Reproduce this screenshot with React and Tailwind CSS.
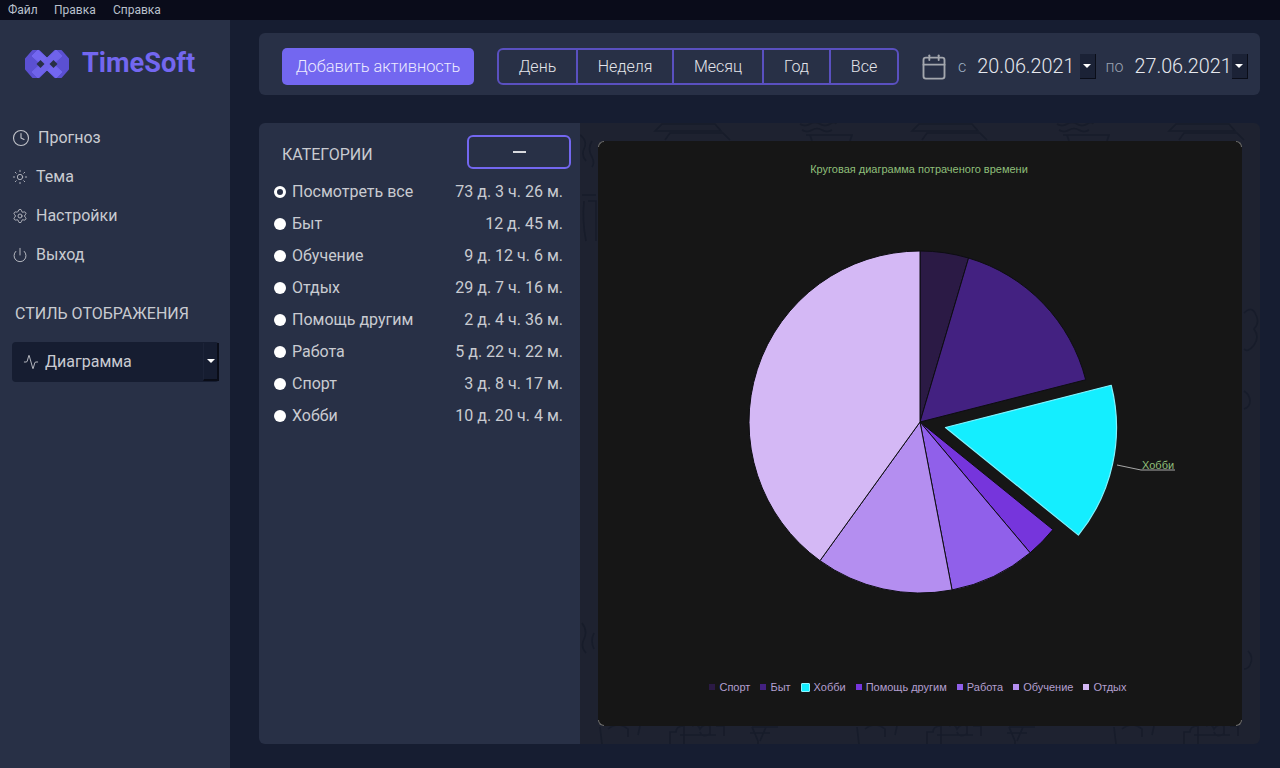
import React from "react";
import { Clock, Sun, Settings, Power, Activity, Calendar } from "lucide-react";

const rows = [
  ["Посмотреть все", "73 д. 3 ч. 26 м."],
  ["Быт", "12 д. 45 м."],
  ["Обучение", "9 д. 12 ч. 6 м."],
  ["Отдых", "29 д. 7 ч. 16 м."],
  ["Помощь другим", "2 д. 4 ч. 36 м."],
  ["Работа", "5 д. 22 ч. 22 м."],
  ["Спорт", "3 д. 8 ч. 17 м."],
  ["Хобби", "10 д. 20 ч. 4 м."],
];

const slices = [
  { name: "Спорт", from: 0, to: 16.5, color: "#2b1a45" },
  { name: "Быт", from: 16.5, to: 75.7, color: "#432181" },
  { name: "Хобби", from: 75.7, to: 129, color: "#14eeff", out: true },
  { name: "Помощь другим", from: 129, to: 139.9, color: "#7635dc" },
  { name: "Работа", from: 139.9, to: 169.2, color: "#9060ea" },
  { name: "Обучение", from: 169.2, to: 215.8, color: "#b48ef0" },
  { name: "Отдых", from: 215.8, to: 360, color: "#d4b8f5" },
];

function arc(cx, cy, r, a, b) {
  const p = (d) => [cx + r * Math.sin((d * Math.PI) / 180), cy - r * Math.cos((d * Math.PI) / 180)];
  const [x1, y1] = p(a);
  const [x2, y2] = p(b);
  const large = b - a > 180 ? 1 : 0;
  return `M${cx} ${cy}L${x1.toFixed(2)} ${y1.toFixed(2)}A${r} ${r} 0 ${large} 1 ${x2.toFixed(2)} ${y2.toFixed(2)}Z`;
}

function Logo() {
  return (
    <svg width="46" height="32" viewBox="0 0 46 32" className="shrink-0">
      <path d="M2 11 L9 3 L15 3 L23 11 L31 3 L37 3 L44 11 L44 21 L37 29 L31 29 L23 21 L15 29 L9 29 L2 21 Z" fill="#5b50d2" stroke="#5b50d2" strokeWidth="2" strokeLinejoin="round" />
      <path d="M8 8 L14 2 L38 24 L32 30 Z" fill="#7367f0" stroke="#7367f0" strokeWidth="1" strokeLinejoin="round" />
      <path d="M32 2 L38 8 L14 30 L8 24 Z" fill="#6f63ea" stroke="#6f63ea" strokeWidth="1" strokeLinejoin="round" />
      <path d="M12.500 16 L16.500 12 L20.500 16 L16.500 20 Z" fill="#283046" />
      <path d="M25.500 16 L29.500 12 L33.500 16 L29.500 20 Z" fill="#283046" />
    </svg>
  );
}

function Caret() {
  return <span className="block w-0 h-0 border-l-[4px] border-r-[4px] border-t-[4px] border-l-transparent border-r-transparent border-t-white" />;
}

function NavItem({ icon, label, gap }) {
  return (
    <div className={`flex items-center h-[39px] ${gap}`}>
      {icon}
      <span>{label}</span>
    </div>
  );
}

function Motifs() {
  const stroke = { fill: "none", stroke: "#171c2a", strokeWidth: 1.6 };
  const offs = [0, 257, 514];
  return (
    <svg className="absolute inset-0 w-full h-full" viewBox="0 0 680 621">
      <g {...stroke}>
        {offs.map((o) => (
          <g key={o} transform={`translate(${o} 0)`}>
            <path d="M75 8 L82 1 L135 1 L141 8 Z" />
            <path d="M85 17 L90 10 L143 10 L150 17" />
            <path d="M220 1 q5 3 10 0 t10 0 t10 0 t6 0 M222 7 q5 3 10 0 t10 0 t10 0 M226 12 L272 12 L270 18 M230 12 L232 18" />
            <path d="M20 604 L22 621 M28 606 q10 -8 20 0 v8 M60 603 L58 612" />
            <path d="M90 621 v-12 h6 q0 -6 8 -6 v18 M112 603 q6 -3 8 3 q4 -6 10 -3 v8 q-8 4 -10 -2 M136 603 h8 v10 M100 612 h36" />
            <path d="M172 604 L178 618 M186 604 L180 618 M172 604 h26 M190 610 h-20 M178 618 v4" />
          </g>
        ))}
        <path d="M0 12 q8 6 4 14 q-3 6 2 12 M12 18 q-5 8 0 16 q3 6 0 10" />
        <path d="M2 72 h14 M8 78 h8 v40 M4 78 q-2 20 2 40" />
        <path d="M2 500 q6 8 2 16 q-4 8 2 14 M14 510 q-4 8 0 16" />
        <path d="M664 190 q8 -8 12 2 q4 8 -2 14 q6 8 0 16 q-6 8 -10 4" />
        <path d="M664 268 q6 4 6 10 q0 6 -6 8" />
        <path d="M668 528 q6 6 2 14 q-2 4 -6 4" />
      </g>
    </svg>
  );
}

export default function App() {
  const corner = "absolute w-[6px] h-[6px] border-[#6e6e6e]";
  return (
    <div className="w-[1280px] h-[768px] flex flex-col overflow-hidden bg-[#161d31] text-[16px] text-[#c9cbd1] font-['Roboto',sans-serif]">
      <div className="h-[20px] shrink-0 bg-[#0a0c1a] flex items-center pl-[8px] text-[12px] text-[#b9c0cc]">
        <span className="w-[46px]">Файл</span>
        <span className="w-[59px]">Правка</span>
        <span>Справка</span>
      </div>

      <div className="flex-1 flex min-h-0">
        <aside className="w-[230px] shrink-0 bg-[#283046] flex flex-col">
          <div className="flex items-center pl-[24px] gap-[12px] h-[87px]">
            <Logo />
            <span className="text-[27.2px] leading-none font-bold text-[#7367f0]">TimeSoft</span>
          </div>
          <div className="mt-[11px] flex flex-col">
            <NavItem gap="gap-[8px] pl-[12px]" icon={<Clock size={18} strokeWidth={1.5} className="text-[#c0c2c8]" />} label="Прогноз" />
            <NavItem gap="gap-[8px] pl-[12px]" icon={<Sun size={16} strokeWidth={1.3} className="text-[#c0c2c8]" />} label="Тема" />
            <NavItem gap="gap-[8px] pl-[12px]" icon={<Settings size={16} strokeWidth={1.3} className="text-[#c0c2c8]" />} label="Настройки" />
            <NavItem gap="gap-[8px] pl-[12px]" icon={<Power size={16} strokeWidth={1.4} className="text-[#c0c2c8]" />} label="Выход" />
          </div>
          <div className="mt-[20px] pl-[15px] h-[39px] flex items-center">СТИЛЬ ОТОБРАЖЕНИЯ</div>
          <div className="mt-[9px] ml-[12px] w-[207px] h-[40px] bg-[#161d31] rounded-[4px] flex items-center justify-between">
            <div className="flex items-center gap-[6px] pl-[11px]">
              <Activity size={16} strokeWidth={1.4} className="text-[#c0c2c8]" />
              <span>Диаграмма</span>
            </div>
            <div className="w-[16px] h-[38px] flex items-center justify-center bg-[#161d31] border-l border-l-[#1c2338] border-r-2 border-b-2 border-r-[#0a0d18] border-b-[#0a0d18]">
              <Caret />
            </div>
          </div>
        </aside>

        <main className="flex-1 min-w-0 flex flex-col pt-[13px] pl-[29px] pr-[20px] pb-[24px] gap-[28px]">
          <div className="h-[62px] shrink-0 rounded-[6px] bg-[#283046] flex items-center pl-[23px] pt-[5px]">
            <button className="w-[192px] h-[37px] pt-[1px] rounded-[5px] bg-[#7367f0] text-[16.4px] text-[#eceaff] font-light">Добавить активность</button>
            <div className="ml-[23px] w-[402px] h-[37px] rounded-[6px] border-2 border-[#5a50c0] flex font-light text-[#e4e5ea]">
              <span className="w-[79px] pt-[1px] flex items-center justify-center border-r-2 border-[#5a50c0]">День</span>
              <span className="w-[96px] pt-[1px] flex items-center justify-center border-r-2 border-[#5a50c0]">Неделя</span>
              <span className="w-[90px] pt-[1px] flex items-center justify-center border-r-2 border-[#5a50c0]">Месяц</span>
              <span className="w-[67px] pt-[1px] flex items-center justify-center border-r-2 border-[#5a50c0]">Год</span>
              <span className="flex-1 pt-[1px] flex items-center justify-center">Все</span>
            </div>
            <Calendar size={28} strokeWidth={1.6} className="ml-[21px] text-[#a4a7ae]" />
            <span className="ml-[10px] text-[#9fb0c4] font-light">с</span>
            <span className="ml-[11px] text-[19.8px] font-light text-[#e6e8ee]">20.06.2021</span>
            <div className="ml-[5px] w-[16px] h-[25px] flex items-center justify-center bg-[#1b2236] border-r border-b border-[#0a0d18]"><Caret /></div>
            <span className="ml-[10px] text-[#9aa2b0] font-light">по</span>
            <span className="ml-[11px] text-[19.8px] font-light text-[#e6e8ee]">27.06.2021</span>
            <div className="w-[16px] h-[25px] flex items-center justify-center bg-[#1b2236] border-r border-b border-[#0a0d18]"><Caret /></div>
          </div>

          <div className="flex-1 min-h-0 flex rounded-[6px] overflow-hidden">
            <section className="w-[321px] shrink-0 bg-[#283046] flex flex-col">
              <div className="flex items-center justify-between h-[46px] mt-[12px] pl-[23px] pr-[9px]">
                <span className="-mt-[6px]">КАТЕГОРИИ</span>
                <div className="w-[104px] h-[34px] -mt-[12px] rounded-[6px] border-2 border-[#7367f0] flex items-center justify-center">
                  <span className="block w-[13px] h-[1.5px] bg-[#d8d9de]" />
                </div>
              </div>
              <div className="flex flex-col -mt-[5px]">
                {rows.map(([n, t], i) => (
                  <div key={n} className="h-[32px] flex items-center pl-[15px] pr-[17px]">
                    <span className={`w-[12px] h-[12px] rounded-full shrink-0 ${i === 0 ? "border-[3px] border-white bg-[#283046]" : "bg-white"}`} />
                    <span className="ml-[6px]">{n}</span>
                    <span className="ml-auto">{t}</span>
                  </div>
                ))}
              </div>
            </section>

            <section className="relative flex-1 min-w-0 bg-[#1e2230] p-[18px]">
              <Motifs />
              <div className="relative h-full rounded-[6px] bg-[#161616] flex flex-col">
                <span className={`${corner} top-0 left-0 rounded-tl-[6px] border-t border-l`} />
                <span className={`${corner} top-0 right-0 rounded-tr-[6px] border-t border-r`} />
                <span className={`${corner} bottom-0 left-0 rounded-bl-[6px] border-b border-l`} />
                <span className={`${corner} bottom-0 right-0 rounded-br-[6px] border-b border-r`} />
                <div className="h-[40px] shrink-0 pt-[21px] pr-[2px] text-center text-[11px] leading-[14px] text-[#8fbf7a] font-['Liberation_Sans',sans-serif]">
                  Круговая диаграмма потраченого времени
                </div>
                <svg width="644" height="490" viewBox="0 0 644 490" className="shrink-0 block">
                  {slices.map((s) => {
                    const dx = s.out ? 25.5 : 0;
                    const dy = s.out ? 5.5 : 0;
                    return (
                      <path
                        key={s.name}
                        d={arc(322 + dx, 241 + dy, 171, s.from, s.to)}
                        fill={s.color}
                        stroke={s.out ? "#7ff3ff" : "#0d0d12"}
                        strokeWidth={s.out ? 1.2 : 1}
                        strokeLinejoin="round"
                      />
                    );
                  })}
                  <path d="M519 284 L543 289 L577 289" fill="none" stroke="#a8a8a8" strokeWidth="1" />
                  <text x="544" y="288" fontSize="11" fontFamily="'Liberation Sans',sans-serif" fill="#8fbf7a">Хобби</text>
                </svg>
                <div className="h-[32px] shrink-0 flex items-center justify-center pr-[4px] gap-[10px] text-[11px] text-[#b39fcf] font-['Liberation_Sans',sans-serif]">
                  {slices.map((s) => (
                    <div key={s.name} className="flex items-center gap-[4px]">
                      <span
                        className={s.out ? "w-[9px] h-[9px] rounded-[1px] border border-[#8ff4ff]" : "w-[6px] h-[6px]"}
                        style={{ backgroundColor: s.color }}
                      />
                      <span>{s.name}</span>
                    </div>
                  ))}
                </div>
              </div>
            </section>
          </div>
        </main>
      </div>
    </div>
  );
}
